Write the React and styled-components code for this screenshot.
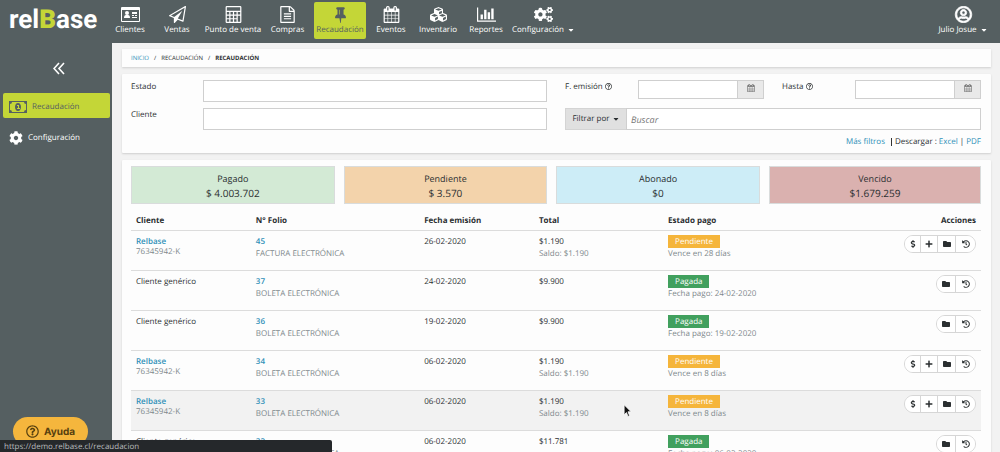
import React from "react";
import styled, { createGlobalStyle } from "styled-components";
import {
  FaCubes,
  FaCogs,
  FaCog,
  FaRegUserCircle,
  FaRegQuestionCircle,
  FaCaretDown,
  FaDollarSign,
  FaPlus,
  FaFolder,
  FaHistory,
} from "react-icons/fa";

const CardIcon = () => (
  <svg viewBox="0 0 19 17" fill="currentColor" fillRule="evenodd">
    <path d="M1 1h17q1 0 1 1v13q0 1-1 1h-17q-1 0-1-1v-13q0-1 1-1zM1 4v11h17v-11z" />
    <circle cx="6" cy="7" r="2" />
    <path d="M3 12q0-3 2-3h2q2 0 2 3zM11 6h5v2h-5zM11 9h2v1h-2zM14 9h2v1h-2zM11 11h5v1h-5z" />
  </svg>
);

const PlaneIcon = () => (
  <svg viewBox="0 0 1792 1792" fill="currentColor">
    <path d="M1764 11q33 24 27 64l-256 1536q-5 29-32 45-14 8-31 8-11 0-24-5l-527-215-298 327q-18 21-47 21-14 0-23-4-19-7-30-23.500t-11-36.500v-452l-472-193q-37-14-40-55-3-39 32-59l1664-960q35-21 68 2zm-342 1499l221-1323-1434 827 336 137 863-639-478 797z" />
  </svg>
);

const CalculatorIcon = () => (
  <svg viewBox="0 0 13 14" fill="currentColor" fillRule="evenodd">
    <path d="M1 0h11q1 0 1 1v12q0 1-1 1h-11q-1 0-1-1v-12q0-1 1-1zM1 1v3h11v-3zM1 5v2h2v-2zM4 5v2h2v-2zM7 5v2h2v-2zM10 5v2h2v-2zM1 8v2h2v-2zM4 8v2h2v-2zM7 8v2h2v-2zM10 8v5h2v-5zM1 11v2h2v-2zM4 11v2h2v-2zM7 11v2h2v-2z" />
  </svg>
);

const FileIcon = () => (
  <svg viewBox="0 0 1792 1792" fill="currentColor">
    <path d="M1596 380q28 28 48 76t20 88v1152q0 40-28 68t-68 28h-1344q-40 0-68-28t-28-68v-1600q0-40 28-68t68-28h896q40 0 88 20t76 48zm-444-244v376h376q-10-29-22-41l-313-313q-12-12-41-22zm384 1528v-1024h-416q-40 0-68-28t-28-68v-416h-768v1536h1280zm-1024-864q0-14 9-23t23-9h704q14 0 23 9t9 23v64q0 14-9 23t-23 9h-704q-14 0-23-9t-9-23v-64zm736 224q14 0 23 9t9 23v64q0 14-9 23t-23 9h-704q-14 0-23-9t-9-23v-64q0-14 9-23t23-9h704zm0 256q14 0 23 9t9 23v64q0 14-9 23t-23 9h-704q-14 0-23-9t-9-23v-64q0-14 9-23t23-9h704z" />
  </svg>
);

const PinIcon = () => (
  <svg viewBox="0 0 1792 1792" fill="currentColor">
    <path d="M800 864v-448q0-14-9-23t-23-9-23 9-9 23v448q0 14 9 23t23 9 23-9 9-23zm672 352q0 26-19 45t-45 19h-429l-51 483q-2 12-10.500 20.500t-20.500 8.500h-1q-27 0-32-27l-76-485h-404q-26 0-45-19t-19-45q0-123 78.500-221.500t177.500-98.500v-512q-52 0-90-38t-38-90 38-90 90-38h640q52 0 90 38t38 90-38 90-90 38v512q99 0 177.500 98.500t78.500 221.500z" />
  </svg>
);

const CalendarIcon = () => (
  <svg viewBox="0 0 1792 1792" fill="currentColor">
    <path d="M192 1664h288v-288h-288v288zm352 0h320v-288h-320v288zm-352-352h288v-320h-288v320zm352 0h320v-320h-320v320zm-352-384h288v-288h-288v288zm736 736h320v-288h-320v288zm-384-736h320v-288h-320v288zm768 736h288v-288h-288v288zm-384-352h320v-320h-320v320zm-352-864v-288q0-13-9.500-22.500t-22.500-9.500h-64q-13 0-22.500 9.500t-9.500 22.500v288q0 13 9.500 22.500t22.500 9.500h64q13 0 22.500-9.500t9.500-22.500zm736 864h288v-320h-288v320zm-384-384h320v-288h-320v288zm384 0h288v-288h-288v288zm32-480v-288q0-13-9.500-22.500t-22.500-9.500h-64q-13 0-22.500 9.500t-9.500 22.500v288q0 13 9.500 22.500t22.500 9.500h64q13 0 22.500-9.500t9.500-22.500zm384-64v1280q0 52-38 90t-90 38h-1408q-52 0-90-38t-38-90v-1280q0-52 38-90t90-38h128v-96q0-66 47-113t113-47h64q66 0 113 47t47 113v96h384v-96q0-66 47-113t113-47h64q66 0 113 47t47 113v96h128q52 0 90 38t38 90z" />
  </svg>
);

const ChartIcon = () => (
  <svg viewBox="0 0 2048 1792" fill="currentColor">
    <path d="M640 896v512h-256v-512h256zm384-512v1024h-256v-1024h256zm1024 1152v128h-2048v-1536h128v1408h1920zm-640-896v768h-256v-768h256zm384-384v1152h-256v-1152h256z" />
  </svg>
);

const MoneyIcon = () => (
  <svg viewBox="0 0 18 12" fill="currentColor" fillRule="evenodd">
    <path d="M0 0h18v12h-18zM3 1q0 2-2 2v6q2 0 2 2h12q0-2 2-2v-6q-2 0-2-2z" />
    <path d="M9 2c4 0 4 8 0 8s-4-8 0-8zM8 4v1h1v2h-1v1h3v-1h-1v-3z" />
  </svg>
);

const ChevronsIcon = () => (
  <svg viewBox="0 0 12 13" fill="none" stroke="currentColor" strokeWidth="1.6">
    <path d="M6 1L1 6.500L6 12M11 1L6 6.500L11 12" />
  </svg>
);

const nav = [
  { label: "Clientes", icon: <CardIcon />, width: 38 },
  { label: "Ventas", icon: <PlaneIcon />, width: 44 },
  { label: "Punto de venta", icon: <CalculatorIcon />, width: 56 },
  { label: "Compras", icon: <FileIcon />, width: 41 },
  { label: "Recaudación", icon: <PinIcon />, width: 52, active: true },
  { label: "Eventos", icon: <CalendarIcon />, width: 38 },
  { label: "Inventario", icon: <FaCubes />, width: 44 },
  { label: "Reportes", icon: <ChartIcon />, width: 40 },
  { label: "Configuración", icon: <FaCogs />, width: 63, caret: true },
];

const totals = [
  { label: "Pagado", value: "$ 4.003.702", color: "#d3ead5" },
  { label: "Pendiente", value: "$ 3.570", color: "#f3d3ab" },
  { label: "Abonado", value: "$0", color: "#cdedf7" },
  { label: "Vencido", value: "$1.679.259", color: "#dab1af" },
];

const columns = [
  { label: "Cliente", width: "14.1%" },
  { label: "N° Folio", width: "19.8%" },
  { label: "Fecha emisión", width: "13.5%" },
  { label: "Total", width: "15.2%" },
  { label: "Estado pago", width: "18.4%" },
  { label: "Acciones", width: "19%" },
];

const rows = [
  { rut: "76345942-K", folio: 45, doc: "FACTURA ELECTRÓNICA", date: "26-02-2020", total: "$1.190", note: "Vence en 28 días" },
  { folio: 37, doc: "BOLETA ELECTRÓNICA", date: "24-02-2020", total: "$9.900", paid: true, note: "Fecha pago: 24-02-2020" },
  { folio: 36, doc: "BOLETA ELECTRÓNICA", date: "19-02-2020", total: "$9.900", paid: true, note: "Fecha pago: 19-02-2020" },
  { rut: "76345942-K", folio: 34, doc: "BOLETA ELECTRÓNICA", date: "06-02-2020", total: "$1.190", note: "Vence en 8 días" },
  { rut: "76345942-K", folio: 33, doc: "BOLETA ELECTRÓNICA", date: "06-02-2020", total: "$1.190", note: "Vence en 8 días", hover: true },
  { folio: 32, doc: "BOLETA ELECTRÓNICA", date: "06-02-2020", total: "$11.781", paid: true, note: "Fecha pago: 06-02-2020" },
];

const App = () => {
  return (
    <Container>
      <GlobalStyle />
      <Header>
        <Brand href="#" aria-label="relBase">
          rel<b>B</b>ase
        </Brand>
        <Nav>
          {nav.map((item) => (
            <NavItem key={item.label} href="#" $active={item.active} $width={item.width}>
              {item.icon}
              <span>
                {item.label}
                {item.caret && <FaCaretDown />}
              </span>
            </NavItem>
          ))}
        </Nav>
        <NavItem href="#" $width={48}>
          <FaRegUserCircle stroke="currentColor" strokeWidth={24} />
          <span>
            Julio Josue
            <FaCaretDown />
          </span>
        </NavItem>
      </Header>
      <Body>
        <Sidebar>
          <Collapse aria-label="Contraer menú">
            <ChevronsIcon />
          </Collapse>
          <SideLink href="#" $active>
            <MoneyIcon />
            Recaudación
          </SideLink>
          <SideLink href="#">
            <FaCog />
            Configuración
          </SideLink>
          <Help>
            <FaRegQuestionCircle />
            Ayuda
          </Help>
        </Sidebar>
        <Main>
          <Crumbs>
            <a href="#">INICIO</a>
            <span>/</span>
            <span>RECAUDACIÓN</span>
            <span>/</span>
            <b>RECAUDACIÓN</b>
          </Crumbs>
          <Panel>
            <Filters>
              <Field>
                <label htmlFor="estado">Estado</label>
                <Input id="estado" />
              </Field>
              <Dates>
                <DateField>
                  <label htmlFor="emision">
                    F. emisión <FaRegQuestionCircle />
                  </label>
                  <DateBox>
                    <Input id="emision" />
                    <DateButton aria-label="Abrir calendario de emisión">
                      <CalendarIcon />
                    </DateButton>
                  </DateBox>
                </DateField>
                <DateField>
                  <label htmlFor="hasta">
                    Hasta <FaRegQuestionCircle />
                  </label>
                  <DateBox>
                    <Input id="hasta" />
                    <DateButton aria-label="Abrir calendario hasta">
                      <CalendarIcon />
                    </DateButton>
                  </DateBox>
                </DateField>
              </Dates>
              <Field>
                <label htmlFor="cliente">Cliente</label>
                <Input id="cliente" />
              </Field>
              <Search>
                <FilterButton>
                  Filtrar por <FaCaretDown />
                </FilterButton>
                <Input aria-label="Buscar" placeholder="Buscar" />
              </Search>
            </Filters>
            <Downloads>
              <a href="#">Más filtros</a>
              <Divider />
              Descargar : <a href="#">Excel</a> | <a href="#">PDF</a>
            </Downloads>
          </Panel>
          <Panel>
            <Totals>
              {totals.map((t) => (
                <Total key={t.label} $color={t.color}>
                  <TotalName>{t.label}</TotalName>
                  <TotalValue>{t.value}</TotalValue>
                </Total>
              ))}
            </Totals>
            <Table>
              <thead>
                <tr>
                  {columns.map((c) => (
                    <HeadCell key={c.label} $width={c.width}>
                      {c.label}
                    </HeadCell>
                  ))}
                </tr>
              </thead>
              <tbody>
                {rows.map((r) => (
                  <Row key={r.folio} $hover={r.hover}>
                    <td>
                      {r.rut ? <a href="#">Relbase</a> : "Cliente genérico"}
                      {r.rut && <Rut>{r.rut}</Rut>}
                    </td>
                    <td>
                      <a href="#">{r.folio}</a>
                      <Sub>{r.doc}</Sub>
                    </td>
                    <td>{r.date}</td>
                    <td>
                      {r.total}
                      {!r.paid && <Sub>Saldo: {r.total}</Sub>}
                    </td>
                    <td>
                      <Badge $paid={r.paid}>{r.paid ? "Pagada" : "Pendiente"}</Badge>
                      <Sub>{r.note}</Sub>
                    </td>
                    <td>
                      <Actions>
                        {!r.paid && (
                          <>
                            <Action $width={15} aria-label="Pagar">
                              <FaDollarSign />
                            </Action>
                            <Action $width={17} aria-label="Agregar">
                              <FaPlus />
                            </Action>
                          </>
                        )}
                        <Action $width={18} aria-label="Documentos">
                          <FaFolder />
                        </Action>
                        <Action $width={20} aria-label="Historial">
                          <FaHistory />
                        </Action>
                      </Actions>
                    </td>
                  </Row>
                ))}
              </tbody>
            </Table>
          </Panel>
        </Main>
      </Body>
      <Status>https://demo.relbase.cl/recaudacion</Status>
      <Pointer viewBox="0 0 12 18">
        <path d="M1 1v13l3-3 2 5 2-1-2-5h4z" fill="#111" stroke="#fff" />
      </Pointer>
    </Container>
  );
};
export default App;

const GlobalStyle = createGlobalStyle`
  * {
    box-sizing: border-box;
  }
  body {
    margin: 0;
    font-family: "Open Sans", "Noto Sans", sans-serif;
    font-size: 8px;
    line-height: 12px;
    text-rendering: geometricPrecision;
    color: #2b2f31;
    background-color: #f2f2f2;
  }
  a {
    color: #3090b8;
    text-decoration: none;
  }
  button, input {
    font: inherit;
    color: inherit;
    text-rendering: inherit;
    border-radius: 0;
    margin: 0;
  }
  button {
    cursor: pointer;
  }
`;
const Container = styled.div`
  display: flex;
  flex-direction: column;
  height: 100vh;
  overflow: hidden;
`;
const Header = styled.header`
  display: flex;
  align-items: flex-start;
  flex: none;
  height: 43px;
  padding: 2px 13px 0 9px;
  background-color: #555f61;
`;
const Brand = styled.a`
  width: 102px;
  font-family: "Roboto", sans-serif;
  font-size: 26px;
  font-weight: 700;
  line-height: 36px;
  color: #fff;

  b {
    color: #c4d637;
  }
`;
const Nav = styled.nav`
  display: flex;
  flex: 1;
  gap: 6px;
`;
const NavItem = styled.a`
  display: flex;
  flex-direction: column;
  align-items: center;
  gap: 1px;
  width: ${({ $width }) => $width}px;
  height: 37px;
  padding-top: 4px;
  border-radius: 2px;
  white-space: nowrap;
  color: ${({ $active }) => ($active ? "#555f61" : "#fff")};
  background-color: ${({ $active }) => ($active ? "#c4d637" : "transparent")};

  > svg {
    width: 19px;
    height: 17px;
  }
  span {
    display: flex;
    align-items: center;
    gap: 3px;
  }
`;
const Body = styled.div`
  display: flex;
  flex: 1;
  min-height: 0;
`;
const Sidebar = styled.aside`
  display: flex;
  flex: none;
  flex-direction: column;
  width: 112px;
  padding: 16px 2px 0 3px;
  background-color: #555f61;
`;
const Collapse = styled.button`
  display: flex;
  align-items: center;
  align-self: center;
  height: 18px;
  margin: 0 0 16px 5px;
  padding: 0;
  border: 0;
  background: none;
  color: #fff;

  svg {
    width: 12px;
    height: 13px;
  }
`;
const SideLink = styled.a`
  display: flex;
  align-items: center;
  gap: 5px;
  height: 25px;
  margin-bottom: 6px;
  padding: 2px 0 0 6px;
  border-radius: 2px;
  color: ${({ $active }) => ($active ? "#555f61" : "#fff")};
  background-color: ${({ $active }) => ($active ? "#c4d637" : "transparent")};

  svg {
    width: ${({ $active }) => ($active ? 18 : 14)}px;
    height: 14px;
  }
`;
const Help = styled.button`
  display: flex;
  align-items: center;
  justify-content: center;
  gap: 5px;
  width: 75px;
  height: 29px;
  margin: auto 0 6px 10px;
  border: 0;
  border-radius: 15px;
  background-color: #f5b63d;
  color: #57400f;
  font-family: "Inter", sans-serif;
  font-size: 10px;
  font-weight: 700;

  svg {
    width: 13px;
    height: 13px;
  }
`;
const Main = styled.main`
  display: flex;
  flex: 1;
  flex-direction: column;
  gap: 7px;
  padding: 6px 9px 0 10px;
  overflow: hidden;
`;
const Panel = styled.section`
  flex: none;
  padding: 6px 10px 5px 9px;
  border-radius: 1px;
  background-color: #fdfdfd;
  box-shadow: 0 1px 2px #cfcfcf;
`;
const Crumbs = styled.nav`
  display: flex;
  flex: none;
  align-items: center;
  gap: 5px;
  height: 18px;
  padding: 0 9px;
  background-color: #fdfdfd;
  box-shadow: 0 1px 2px #cfcfcf;
  font-size: 6px;
`;
const Filters = styled.div`
  display: grid;
  grid-template-columns: 1fr 1fr;
  gap: 6px 18px;
`;
const Field = styled.div`
  display: flex;

  label {
    width: 72px;
    line-height: 14px;
  }
`;
const Input = styled.input`
  flex: 1;
  min-width: 0;
  height: 22px;
  padding: 0 4px;
  border: 1px solid #cfcfcf;
  background-color: #fff;
  font-size: 9px;

  &::placeholder {
    color: #777;
    font-style: italic;
  }
`;
const Dates = styled.div`
  display: grid;
  grid-template-columns: 1fr 1fr;
  gap: 18px;
`;
const DateField = styled.div`
  display: flex;

  label {
    flex: 1;
    line-height: 14px;
    white-space: nowrap;
  }
  label svg {
    width: 7px;
    height: 7px;
    vertical-align: -1px;
  }
`;
const DateBox = styled.div`
  display: flex;
  width: 126px;
  height: 19px;

  input {
    height: 19px;
  }
`;
const DateButton = styled.button`
  width: 26px;
  padding: 0;
  border: 1px solid #cfcfcf;
  border-left: 0;
  background-color: #e9e9e9;
  color: #666;

  svg {
    width: 8px;
    height: 8px;
  }
`;
const Search = styled.div`
  display: flex;
`;
const FilterButton = styled.button`
  display: flex;
  align-items: center;
  justify-content: center;
  gap: 2px;
  width: 61px;
  padding: 0;
  border: 1px solid #d4d4d4;
  border-right: 0;
  background-color: #e0e0e0;
`;
const Downloads = styled.div`
  display: flex;
  align-items: center;
  justify-content: flex-end;
  gap: 2px;
  padding-top: 6px;
`;
const Divider = styled.i`
  width: 1px;
  height: 8px;
  margin: 0 1px 0 4px;
  background-color: #333;
`;
const Totals = styled.div`
  display: grid;
  grid-template-columns: 24fr 24fr 24fr 25fr;
  gap: 9px;
`;
const Total = styled.div`
  padding: 4px 4px 2px;
  border: 1px solid #d9dcdc;
  text-align: center;
  background-color: ${({ $color }) => $color};
`;
const TotalName = styled.div`
  font-size: 9px;
  line-height: 15px;
`;
const TotalValue = styled.div`
  font-size: 10px;
  line-height: 15px;
`;
const Table = styled.table`
  width: 100%;
  table-layout: fixed;
  border-collapse: collapse;

  td {
    height: 40px;
    padding: 4px 5px 0;
    vertical-align: top;
    line-height: 13px;
    border-top: 1px solid #dcdcdc;
  }
  td a {
    font-weight: 600;
  }
`;
const HeadCell = styled.th`
  width: ${({ $width }) => $width};
  height: 26px;
  padding: 9px 5px 0;
  text-align: left;
  font-weight: 700;

  &:last-child {
    text-align: right;
  }
`;
const Row = styled.tr`
  background-color: ${({ $hover }) => ($hover ? "#f2f2f2" : "transparent")};
`;
const Rut = styled.div`
  line-height: 8px;
  color: #7d888c;
`;
const Sub = styled.div`
  line-height: 12px;
  color: #7d888c;
`;
const Badge = styled.span`
  display: block;
  width: max-content;
  padding: 0 7px;
  color: #fff;
  background-color: ${({ $paid }) => ($paid ? "#41a05e" : "#f5b53b")};
`;
const Actions = styled.div`
  display: flex;
  width: max-content;
  margin-left: auto;
  border: 1px solid #d6d6d6;
  border-radius: 9px;
  overflow: hidden;
`;
const Action = styled.button`
  display: flex;
  align-items: center;
  justify-content: center;
  width: ${({ $width }) => $width}px;
  height: 16px;
  padding: 0;
  border: 0;
  background-color: #fff;

  & + & {
    border-left: 1px solid #d6d6d6;
  }
`;
const Status = styled.div`
  position: fixed;
  left: 0;
  bottom: 0;
  width: 332px;
  height: 12px;
  padding-left: 4px;
  border-radius: 0 2px 0 0;
  background-color: #25282b;
  color: #b9bcbe;
  line-height: 14px;
`;
const Pointer = styled.svg`
  position: fixed;
  left: 623px;
  top: 404px;
  width: 10px;
  height: 14px;
`;
